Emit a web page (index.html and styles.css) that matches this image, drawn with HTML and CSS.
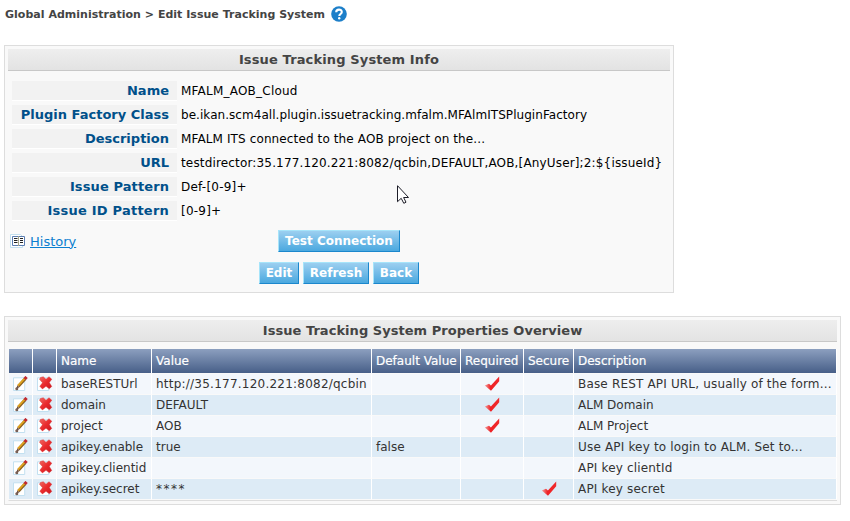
FILE: index.html
```html
<!DOCTYPE html>
<html lang="en">
<head>
<meta charset="utf-8">
<title>Edit Issue Tracking System</title>
<link rel="stylesheet" href="styles.css">
</head>
<body>
<svg class="defs" aria-hidden="true">
  <defs>
    <linearGradient id="red" x1="0" y1="0" x2="1" y2="1"><stop offset="0" stop-color="#ee6a64"/><stop offset=".5" stop-color="#ea2b2d"/><stop offset="1" stop-color="#c91820"/></linearGradient>
    <linearGradient id="tick" x1="0" y1="0" x2="1" y2="0"><stop offset="0" stop-color="#f3a09f"/><stop offset=".4" stop-color="#ee2226"/><stop offset="1" stop-color="#f0292b"/></linearGradient>
    <symbol id="edit" viewBox="0 0 16 16">
      <path d="M.5 1.8h11.2v12.7H.5z" fill="#fff" stroke="#c3e0f0"/>
      <path d="M5.4 10.2L12.2 2.8" stroke="#8a5f20" stroke-width="3"/>
      <path d="M5 9.7L11.7 2.5" stroke="#e2a41c" stroke-width="1.8"/>
      <path d="M11.7 3L13.6 1" stroke="#c0282f" stroke-width="3.2"/>
      <path d="M3 13l1.4-3.6 2 1.9z" fill="#6b4b3d"/>
      <circle cx="3.8" cy="12.8" r="1.5" fill="#786056"/>
    </symbol>
    <symbol id="delete" viewBox="0 0 16 16">
      <path d="M.5 1.8h11.2v12.7H.5z" fill="#fff" stroke="#c3e0f0"/>
      <path d="M3.4 1.5L6.2.7 9 3.2 12 .7l2.8 2.5L12.3 6.500l2.5 3.900-2.500 2.400L9 10.300l-3.600 2.600L2.800 10.300 5.500 6.700 2.500 3.300z" fill="url(#red)" stroke="#d92a2d" stroke-width=".4"/>
    </symbol>
    <symbol id="check" viewBox="0 0 16 16">
      <path d="M.8 9.400l4.200-1.700 1.900 1.700L15.200.6v4.700L7 14.800z" fill="url(#tick)"/>
    </symbol>
  </defs>
</svg>

<h1 class="crumbs">Global Administration &gt; Edit Issue Tracking System
  <svg class="help" viewBox="0 0 16 16"><circle cx="8" cy="8" r="7.8" fill="#1d7fc9"/><path d="M5.200 6.200C5.200 2.800 10.800 2.800 10.800 6c0 2-2.500 2-2.500 4" fill="none" stroke="#fff" stroke-width="2.100"/><circle cx="8.200" cy="12.200" r="1.200" fill="#fff"/></svg>
</h1>

<section class="panel info">
  <h2 class="bar">Issue Tracking System Info</h2>
  <dl class="fields">
    <dt>Name</dt><dd class="wide">MFALM_AOB_Cloud</dd>
    <dt>Plugin Factory Class</dt><dd class="tight">be.ikan.scm4all.plugin.issuetracking.mfalm.MFAlmITSPluginFactory</dd>
    <dt>Description</dt><dd class="text">MFALM ITS connected to the AOB project on the...</dd>
    <dt>URL</dt><dd>testdirector:35.177.120.221:8082/qcbin,DEFAULT,AOB,[AnyUser];2:${issueId}</dd>
    <dt class="mid">Issue Pattern</dt><dd class="wide">Def-[0-9]+</dd>
    <dt class="wide">Issue ID Pattern</dt><dd class="wide">[0-9]+</dd>
  </dl>
  <div class="actions">
    <div class="history">
      <svg viewBox="0 0 16 14"><path d="M.5.5h10l2 2v11H.5z" fill="#fff" stroke="#c3e0f0"/><path d="M2.500 2.500h12v9h-12z" fill="#fff" stroke="#5b7db1"/><path d="M8.500 2v10" stroke="#a8a88c"/><path d="M4 4.500h3.500M4 6.500h3.500M4 8.500h3.500M10 4.500h3M10 6.500h3M10 8.500h3" stroke="#222"/></svg>
      <a href="#">History</a>
    </div>
    <button class="btn test">Test Connection</button>
  </div>
  <div class="buttons">
    <button class="btn edit">Edit</button>
    <button class="btn refresh">Refresh</button>
    <button class="btn back">Back</button>
  </div>
</section>

<section class="panel props">
  <h2 class="bar">Issue Tracking System Properties Overview</h2>
  <table>
    <colgroup><col class="c-icon"><col class="c-icon"><col class="c-name"><col class="c-value"><col class="c-default"><col class="c-req"><col class="c-sec"><col></colgroup>
    <thead><tr><th></th><th></th><th>Name</th><th>Value</th><th>Default Value</th><th>Required</th><th>Secure</th><th>Description</th></tr></thead>
    <tbody>
      <tr><td><svg><use href="#edit"/></svg></td><td><svg><use href="#delete"/></svg></td><td>baseRESTUrl</td><td class="wide">http://35.177.120.221:8082/qcbin</td><td></td><td class="mark"><svg><use href="#check"/></svg></td><td></td><td class="desc">Base REST API URL, usually of the form...</td></tr>
      <tr><td><svg><use href="#edit"/></svg></td><td><svg><use href="#delete"/></svg></td><td>domain</td><td>DEFAULT</td><td></td><td class="mark"><svg><use href="#check"/></svg></td><td></td><td>ALM Domain</td></tr>
      <tr><td><svg><use href="#edit"/></svg></td><td><svg><use href="#delete"/></svg></td><td>project</td><td>AOB</td><td></td><td class="mark"><svg><use href="#check"/></svg></td><td></td><td>ALM Project</td></tr>
      <tr><td><svg><use href="#edit"/></svg></td><td><svg><use href="#delete"/></svg></td><td>apikey.enable</td><td>true</td><td>false</td><td></td><td></td><td class="desc">Use API key to login to ALM. Set to...</td></tr>
      <tr><td><svg><use href="#edit"/></svg></td><td><svg><use href="#delete"/></svg></td><td>apikey.clientid</td><td></td><td></td><td></td><td></td><td class="desc">API key clientId</td></tr>
      <tr><td><svg><use href="#edit"/></svg></td><td><svg><use href="#delete"/></svg></td><td>apikey.secret</td><td class="stars">****</td><td></td><td></td><td class="mark"><svg><use href="#check"/></svg></td><td class="desc">API key secret</td></tr>
    </tbody>
  </table>
</section>

<svg class="cursor" viewBox="0 0 12 20"><path d="M.5.7v16l3.700-3.400 2.600 5 2.200-1.100-2.400-4.700h4.900z" fill="#fff" stroke="#1d1d28"/></svg>
</body>
</html>
```
FILE: styles.css
```css
* { box-sizing: border-box; }
body {
  margin: 0;
  padding: 4px 9px 0 4px;
  background: #fff;
  color: #000;
  font: 12px "DejaVu Sans", Verdana, sans-serif;
  white-space: nowrap;
}
.defs { position: absolute; width: 0; height: 0; }
.crumbs {
  display: flex;
  align-items: center;
  gap: 6px;
  height: 20px;
  margin: 0 0 21px;
  padding-left: 1px;
  font-size: 11px;
  font-weight: bold;
  letter-spacing: .02px;
  color: #444;
}
.help { width: 16px; height: 16px; }
.panel { border: 1px solid #ddd; background: #f9f9f9; padding: 3px; }
.info { width: 670px; height: 248px; margin-bottom: 23px; }
.props { width: 837px; height: 189px; }
.bar {
  height: 22px;
  margin: 0;
  border-bottom: 1px solid #c8c8c8;
  background: linear-gradient(#eee, #e3e3e3);
  font-size: 13px;
  line-height: 21px;
  letter-spacing: .04px;
  text-align: center;
  color: #444;
}
.info .bar { letter-spacing: .13px; }
.fields {
  display: grid;
  grid-template-columns: 165px 1fr;
  grid-auto-rows: 20px;
  gap: 4px;
  margin: 10px 4px 0;
  line-height: 19px;
}
dt {
  padding-right: 8px;
  border-bottom: 1px solid #fff;
  background: #f2f2f2;
  color: #00508a;
  font-size: 13px;
  font-weight: bold;
  text-align: right;
}
dd { margin: 0; line-height: 21px; letter-spacing: .16px; }
.wide { letter-spacing: .22px; }
.mid { letter-spacing: .1px; }
.text { letter-spacing: .12px; }
.tight { letter-spacing: .05px; }
.actions { display: flex; align-items: center; height: 22px; margin-top: 9px; }
.history { display: flex; align-items: center; gap: 4px; width: 270px; padding-left: 2px; font-size: 13px; }
.history svg { width: 16px; height: 14px; }
.history a { color: #0c7fd0; }
.buttons { display: flex; gap: 4px; margin: 10px 0 0 251px; }
.btn {
  height: 22px;
  padding: 0;
  border: 1px solid;
  border-color: #a6e4fa #1b87cc #1b87cc #a6e4fa;
  background: linear-gradient(#9ccff0, #4aa8df);
  color: #fff;
  font: bold 12px/19px "DejaVu Sans", Verdana, sans-serif;
}
.test { width: 122px; }
.edit { width: 40px; }
.refresh { width: 66px; }
.back { width: 46px; }
table {
  table-layout: fixed;
  width: 829px;
  margin: 7px 0 0;
  border-spacing: 0;
  border-bottom: 1px solid #ddd;
  border-left: 1px solid #f9f9f9;
  color: #333;
}
.c-icon { width: 24px; }
.c-name { width: 95px; }
.c-value { width: 220px; }
.c-default { width: 89px; }
.c-req { width: 63px; }
.c-sec { width: 50px; }
th, td { padding: 0 0 0 4px; border-right: 1px solid #fff; text-align: left; }
th {
  height: 25px;
  border-bottom: 1px solid #f9f9f9;
  background: linear-gradient(#8c9fbf, #475f88) padding-box;
  color: #fff;
  font-weight: normal;
  -webkit-text-stroke: .2px #fff;
}
td { height: 21px; border-bottom: 1px solid #f9f9f9; background: #f3f7fc; line-height: 19px; }
tr:nth-child(even) td { background: #ddebf6; }
td.wide { letter-spacing: .23px; }
.desc { letter-spacing: .17px; }
.stars { letter-spacing: 1.5px; }
td svg { display: block; width: 16px; height: 16px; }
.mark { padding: 0; }
.mark svg { margin: 0 auto; }
.cursor { position: absolute; left: 397px; top: 185px; width: 12px; height: 20px; }
```
